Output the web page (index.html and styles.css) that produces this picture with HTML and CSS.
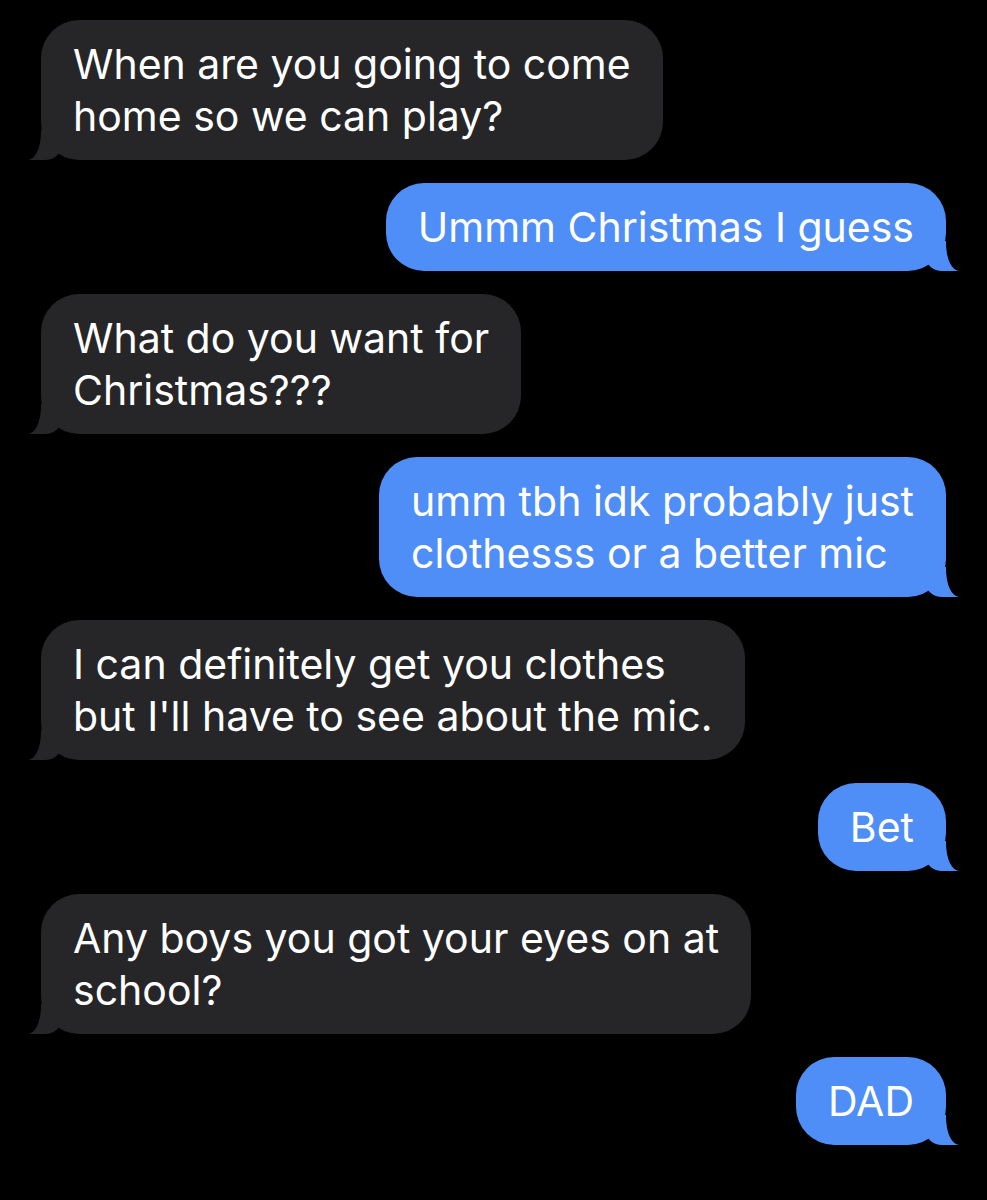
FILE: index.html
```html
<!DOCTYPE html>
<html>
  <head>
    <meta charset="utf-8" />
    <meta name="viewport" content="width=device-width, initial-scale=1.0" />
    <title>Messages</title>
    <link rel="stylesheet" href="styles.css">
  </head>
  <body>
    <div id="thread">
      <div class="bubble received">When are you going to come<br>home so we can play?</div>
      <div class="bubble sent">Ummm Christmas I guess</div>
      <div class="bubble received">What do you want for<br>Christmas???</div>
      <div class="bubble sent">umm tbh idk probably just<br>clothesss or a better mic</div>
      <div class="bubble received">I can definitely get you clothes<br>but I'll have to see about the mic.</div>
      <div class="bubble sent">Bet</div>
      <div class="bubble received">Any boys you got your eyes on at<br>school?</div>
      <div class="bubble sent">DAD</div>
    </div>
  </body>
</html>
```

FILE: styles.css
```css
html {
  box-sizing: border-box;
}
*,
*:before,
*:after {
  box-sizing: inherit;
}
body {
  margin: 0;
  background: #000;
  font-family: Inter, "Noto Sans", sans-serif;
  -webkit-font-smoothing: antialiased;
}
#thread {
  display: flex;
  flex-direction: column;
  gap: 23px;
  padding: 20px 41px;
}
.bubble {
  position: relative;
  width: fit-content;
  padding: 18px 32px;
  border-radius: 38px;
  font-size: 41px;
  line-height: 52px;
  color: #fff;
  white-space: nowrap;
}
.received {
  align-self: flex-start;
  background: #262628;
}
.sent {
  align-self: flex-end;
  background: #4e8ef6;
}

/* tails */
.bubble:before,
.bubble:after {
  content: "";
  position: absolute;
  bottom: 0;
}
.sent:before {
  right: -13px;
  width: 33px;
  height: 30px;
  background: #4e8ef6;
  border-bottom-left-radius: 16px 14px;
}
.sent:after {
  left: 100%;
  width: 20px;
  height: 32px;
  background: #000;
  border-bottom-left-radius: 13px 28px;
}
.received:before {
  left: -13px;
  width: 33px;
  height: 30px;
  background: #262628;
  border-bottom-right-radius: 16px 14px;
}
.received:after {
  right: 100%;
  width: 20px;
  height: 32px;
  background: #000;
  border-bottom-right-radius: 13px 28px;
}
```
